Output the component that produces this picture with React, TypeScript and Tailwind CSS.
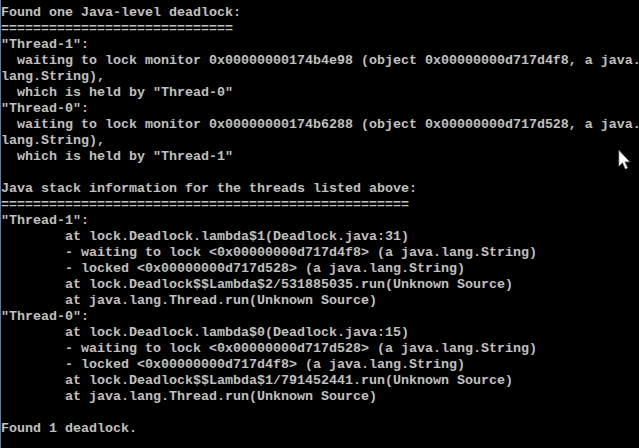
import React from "react";

const T = "        ";
const lines: string[] = [
  "Found one Java-level deadlock:",
  "=============================",
  '"Thread-1":',
  "  waiting to lock monitor 0x00000000174b4e98 (object 0x00000000d717d4f8, a java.",
  "lang.String),",
  '  which is held by "Thread-0"',
  '"Thread-0":',
  "  waiting to lock monitor 0x00000000174b6288 (object 0x00000000d717d528, a java.",
  "lang.String),",
  '  which is held by "Thread-1"',
  "",
  "Java stack information for the threads listed above:",
  "===================================================",
  '"Thread-1":',
  T + "at lock.Deadlock.lambda$1(Deadlock.java:31)",
  T + "- waiting to lock <0x00000000d717d4f8> (a java.lang.String)",
  T + "- locked <0x00000000d717d528> (a java.lang.String)",
  T + "at lock.Deadlock$$Lambda$2/531885035.run(Unknown Source)",
  T + "at java.lang.Thread.run(Unknown Source)",
  '"Thread-0":',
  T + "at lock.Deadlock.lambda$0(Deadlock.java:15)",
  T + "- waiting to lock <0x00000000d717d528> (a java.lang.String)",
  T + "- locked <0x00000000d717d4f8> (a java.lang.String)",
  T + "at lock.Deadlock$$Lambda$1/791452441.run(Unknown Source)",
  T + "at java.lang.Thread.run(Unknown Source)",
  "",
  "Found 1 deadlock.",
  "",
];

export default function App() {
  return (
    <div className="relative w-[639px] h-[448px] overflow-hidden bg-black border-l border-[#4f7fab]">
      <div
        className="pt-[5px] pl-[0px] text-[#c0c0c0] font-bold text-[13.3333px] leading-[16px] whitespace-pre"
        style={{ fontFamily: '"Liberation Mono", "DejaVu Sans Mono", monospace' }}
      >
        {lines.map((l, i) => (
          <div key={i} className="h-[16px]">
            {l === "" ? " " : l}
          </div>
        ))}
      </div>
      <svg
        className="absolute left-[617px] top-[150px]"
        width="13"
        height="20"
        viewBox="0 0 13 20"
      >
        <path
          d="M1 0.5 L1 16 L4.5 12.5 L7.5 19 L9.5 18 L6.8 11.8 L11.5 11.8 Z"
          fill="#ffffff"
          stroke="#9a9a9a"
          strokeWidth="0.8"
        />
      </svg>
    </div>
  );
}
